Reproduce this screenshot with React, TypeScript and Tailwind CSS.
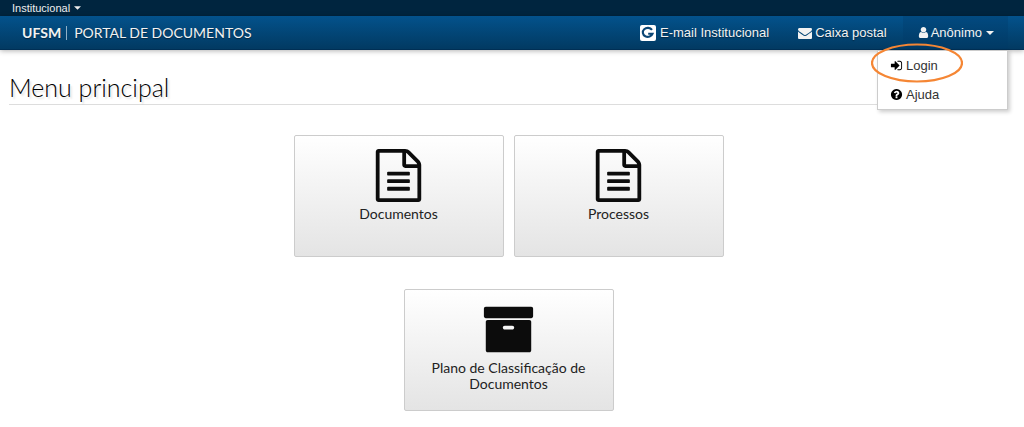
import type { ReactNode } from "react";

const paths = {
  file: "M1596 380q28 28 48 76t20 88v1152q0 40-28 68t-68 28h-1344q-40 0-68-28t-28-68v-1600q0-40 28-68t68-28h896q40 0 88 20t76 48zm-444-244v376h376q-10-29-22-41l-313-313q-12-12-41-22zm384 1528v-1024h-416q-40 0-68-28t-28-68v-416h-768v1536h1280zm-1024-864q0-14 9-23t23-9h704q14 0 23 9t9 23v64q0 14-9 23t-23 9h-704q-14 0-23-9t-9-23v-64zm736 224q14 0 23 9t9 23v64q0 14-9 23t-23 9h-704q-14 0-23-9t-9-23v-64q0-14 9-23t23-9h704zm0 256q14 0 23 9t9 23v64q0 14-9 23t-23 9h-704q-14 0-23-9t-9-23v-64q0-14 9-23t23-9h704z",
  archive:
    "M1088 832q0-26-19-45t-45-19h-256q-26 0-45 19t-19 45 19 45 45 19h256q26 0 45-19t19-45zm576-192v960q0 26-19 45t-45 19h-1408q-26 0-45-19t-19-45v-960q0-26 19-45t45-19h1408q26 0 45 19t19 45zm64-448v256q0 26-19 45t-45 19h-1536q-26 0-45-19t-19-45v-256q0-26 19-45t45-19h1536q26 0 45 19t19 45z",
  signIn:
    "M1312 896q0 26-19 45l-544 544q-19 19-45 19t-45-19-19-45v-288h-448q-26 0-45-19t-19-45v-384q0-26 19-45t45-19h448v-288q0-26 19-45t45-19 45 19l544 544q19 19 19 45zm352-352v704q0 119-84.5 203.5t-203.5 84.5h-320q-13 0-22.5-9.5t-9.5-22.5q0-4-1-20t-.5-26.5 3-23.5 10-19.5 20.5-6.5h320q66 0 113-47t47-113v-704q0-66-47-113t-113-47h-312l-11.5-1-11.5-3-8-5.5-7-9-2-13.5q0-4-1-20t-.5-26.5 3-23.5 10-19.5 20.5-6.5h320q119 0 203.5 84.5t84.5 203.5z",
  help: "M1024 1376v-192q0-14-9-23t-23-9h-192q-14 0-23 9t-9 23v192q0 14 9 23t23 9h192q14 0 23-9t9-23zm256-672q0-88-55.5-163t-138.5-116-170-41q-243 0-371 213-15 24 8 42l132 100q7 6 19 6 16 0 25-12 53-68 86-92 34-24 86-24 48 0 85.5 26t37.5 59q0 38-20 61t-68 45q-63 28-115.5 86.5t-52.5 125.5v36q0 14 9 23t23 9h192q14 0 23-9t9-23q0-19 21.5-49.5t54.5-49.5q32-18 49-28.5t46-35 44.5-48 28-60.5 12.5-81zm384 192q0 209-103 385.5t-279.5 279.5-385.5 103-385.5-103-279.5-279.5-103-385.5 103-385.5 279.5-279.5 385.5-103 385.5 103 279.5 279.5 103 385.5z",
  envelope:
    "M1792 710v794q0 66-47 113t-113 47h-1472q-66 0-113-47t-47-113v-794q44 49 101 87 362 246 497 345 57 42 92.5 65.5t94.5 48 110 24.5h2q51 0 110-24.5t94.5-48 92.5-65.5q170-123 498-345 57-39 100-87zm0-294q0 79-49 151t-122 123q-376 261-468 325-10 7-42.5 31t-54 38.5-52 32.5-57.5 27-50 9h-2q-23 0-50-9t-57.5-27-52-32.5-54-38.5-42.5-31q-91-64-262-182.5t-205-142.5q-62-42-117-115.5t-55-136.5q0-78 41.5-130t118.5-52h1472q65 0 112.5 47t47.5 113z",
  user: "M1536 1399q0 109-62.5 187t-150.5 78h-854q-88 0-150.5-78t-62.5-187q0-85 8.5-160.5t31.5-152 58.5-131 94-89 134.5-34.5q131 128 313 128t313-128q76 0 134.5 34.5t94 89 58.5 131 31.5 152 8.5 160.5zm-256-887q0 159-112.5 271.5t-271.5 112.5-271.5-112.5-112.5-271.5 112.5-271.5 271.5-112.5 271.5 112.5 112.5 271.5z",
};

function Icon({ name, className }: { name: keyof typeof paths; className: string }) {
  return (
    <svg viewBox="0 0 1792 1792" fill="currentColor" aria-hidden="true" className={className}>
      <path d={paths[name]} />
    </svg>
  );
}

function Caret({ className }: { className: string }) {
  return (
    <svg viewBox="0 0 8 4" fill="currentColor" aria-hidden="true" className={className}>
      <path d="M0 0h8L4 4z" />
    </svg>
  );
}

function GoogleBadge() {
  return (
    <svg viewBox="0 0 16 16" aria-hidden="true" className="size-4">
      <rect width="16" height="16" rx="2" fill="#fff" />
      <path
        d="M12 4.9A5 4.5 0 1 0 12.6 8.7H8.2"
        fill="none"
        stroke="#0b4675"
        strokeWidth="2.1"
      />
    </svg>
  );
}

function Card({ icon, children }: { icon: "file" | "archive"; children: ReactNode }) {
  return (
    <a
      href="#"
      className="flex h-[122px] w-[210px] flex-col items-center rounded-xs border border-[#ccc] bg-linear-to-b from-white to-[#e4e4e4] px-5 pt-[13px] text-center font-[Lato,sans-serif] text-sm leading-4 text-[#222]"
    >
      <Icon name={icon} className="mb-1 size-[53px] shrink-0 text-[#0c0c0c]" />
      {children}
    </a>
  );
}

export default function App() {
  return (
    <div className="min-h-screen bg-white font-['Liberation_Sans',Arial,sans-serif] text-[13px] text-[#222]">
      <div className="flex h-4 items-center bg-[#00253f] px-3">
        <button type="button" className="flex items-center gap-1 text-[11px] leading-4 text-[#eee]">
          Institucional
          <Caret className="h-1 w-[7px]" />
        </button>
      </div>

      <header className="flex h-[34px] items-center justify-between border-b border-[#002f55] bg-linear-to-b from-[#03528c] to-[#023a62] pr-4 pl-[22px] text-[#f2f2f2] shadow-[0_1px_5px_rgba(0,0,0,0.3)] text-shadow-[0_1px_1px_rgba(0,0,0,0.4)]">
        <a href="#" className="flex items-center gap-[5px] font-[Lato,sans-serif] text-sm leading-4">
          <strong>UFSM</strong>
          <span className="h-[14px] w-px bg-[#8fb0c8]" />
          <span className="pl-[2px]">PORTAL DE DOCUMENTOS</span>
        </a>
        <nav className="flex h-full items-center">
          <a href="#" className="flex items-center gap-1 pr-[29px]">
            <GoogleBadge />
            E-mail Institucional
          </a>
          <a href="#" className="flex items-center gap-[3px] pr-4">
            <Icon name="envelope" className="size-[14px]" />
            Caixa postal
          </a>
          <div className="relative h-full">
            <button
              type="button"
              aria-expanded="true"
              className="flex h-full items-center gap-px bg-[#003a66]/30 px-[14px]"
            >
              <Icon name="user" className="size-[13px]" />
              Anônimo
              <Caret className="ml-[3px] h-1 w-2" />
            </button>
            <ul className="absolute top-full right-0 z-10 mt-px w-[131px] border border-[#ccc] bg-white text-[#333] shadow-[2px_2px_4px_rgba(0,0,0,0.2)] text-shadow-none">
              <li>
                <a href="#" className="relative flex h-[29px] items-center gap-[3px] pl-3">
                  <Icon name="signIn" className="size-[13px] text-black" />
                  Login
                  <svg
                    viewBox="0 0 92 40"
                    fill="none"
                    aria-hidden="true"
                    className="pointer-events-none absolute -top-2 -left-[7px] h-10 w-[92px]"
                  >
                    <ellipse cx="46" cy="20" rx="45" ry="18.5" stroke="#f58634" strokeWidth="2.2" />
                  </svg>
                </a>
              </li>
              <li>
                <a href="#" className="flex h-[29px] items-center gap-[3px] pl-3">
                  <Icon name="help" className="size-[13px] text-black" />
                  Ajuda
                </a>
              </li>
            </ul>
          </div>
        </nav>
      </header>

      <main className="pr-4 pl-[9px]">
        <h1 className="border-b border-[#ddd] pt-[22px] pb-[2px] font-[Lato,sans-serif] text-[25px] leading-[30px] font-light text-black text-shadow-[2px_2px_2px_rgba(0,0,0,0.12)]">
          Menu principal
        </h1>
        <div className="mx-auto flex max-w-[430px] flex-wrap justify-center gap-x-[10px] gap-y-8 pt-[30px] pb-4">
          <Card icon="file">Documentos</Card>
          <Card icon="file">Processos</Card>
          <Card icon="archive">Plano de Classificação de Documentos</Card>
        </div>
      </main>
    </div>
  );
}
